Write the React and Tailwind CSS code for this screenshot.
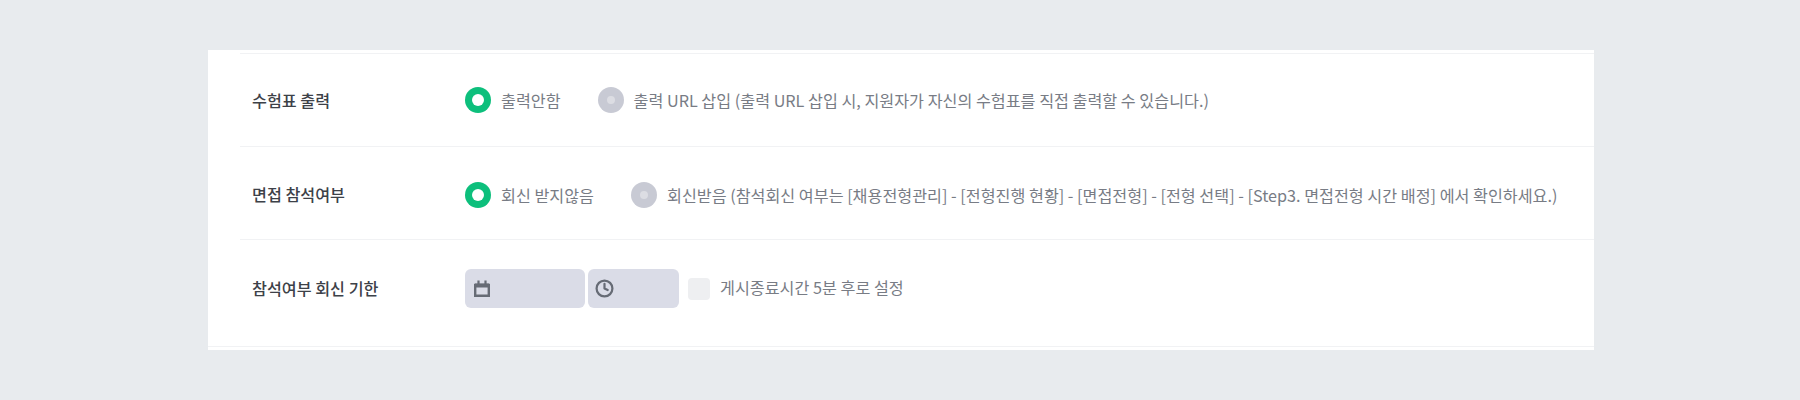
import { Clock } from 'lucide-react';

const FONT = "font-['Noto_Sans_CJK_KR','Noto_Sans',sans-serif]";

function CalendarIcon() {
  return (
    <svg width="16" height="17" viewBox="0 0 16 17" className="text-[#666b75]" fill="none">
      <path d="M1.2 5h13.6v10.8H1.2z" stroke="currentColor" strokeWidth="2.4" />
      <path d="M1 3.5h14V7.5H1z" fill="currentColor" />
      <path d="M4.5 0.5v4M11.5 0.5v4" stroke="currentColor" strokeWidth="2.2" />
    </svg>
  );
}

function Radio({ checked, label, className = '' }) {
  return (
    <div className={`flex items-center gap-[10px] shrink-0 ${className}`}>
      {checked ? (
        <span className="w-[26px] h-[26px] rounded-full bg-[#0dbf7c] flex items-center justify-center">
          <span className="w-[12px] h-[12px] rounded-full bg-white" />
        </span>
      ) : (
        <span className="w-[26px] h-[26px] rounded-full bg-[#c8cad4] flex items-center justify-center">
          <span className="w-[8px] h-[8px] rounded-full bg-[#dcdde3]" />
        </span>
      )}
      <span className="text-[16.2px] leading-[26px] text-[#787c85] whitespace-nowrap">{label}</span>
    </div>
  );
}

function Row({ title, children, className }) {
  return (
    <div className={`flex items-center ${className}`}>
      <div className="w-[225px] pl-[12px] text-[16.2px] font-medium text-[#3d4148] shrink-0">{title}</div>
      {children}
    </div>
  );
}

export default function App() {
  return (
    <div className={`w-[1800px] h-[400px] bg-[#e8ebee] pt-[50px] pl-[208px] ${FONT}`}>
      <div className="w-[1386px] h-[300px] bg-white pl-[32px] pt-[3px]">
        <div className="border-t border-[#f1f2f4]">
          <Row title="수험표 출력" className="h-[93px] border-b border-[#f1f2f4]">
            <Radio checked label="출력안함" />
            <Radio className="ml-[37px]" label="출력 URL 삽입 (출력 URL 삽입 시, 지원자가 자신의 수험표를 직접 출력할 수 있습니다.)" />
          </Row>
          <Row title="면접 참석여부" className="h-[93px] pt-[3px] border-b border-[#f1f2f4]">
            <Radio checked label="회신 받지않음" />
            <Radio className="ml-[37px]" label="회신받음 (참석회신 여부는 [채용전형관리] - [전형진행 현황] - [면접전형] - [전형 선택] - [Step3. 면접전형 시간 배정] 에서 확인하세요.)" />
          </Row>
          <Row title="참석여부 회신 기한" className="h-[106px] pb-[9px]">
            <div className="flex items-center">
              <div className="w-[120px] h-[39px] rounded-[6px] bg-[#dadce7] flex items-center pl-[9px]">
                <CalendarIcon />
              </div>
              <div className="w-[91px] h-[39px] ml-[3px] rounded-[6px] bg-[#dadce7] flex items-center pl-[7px]">
                <Clock size={19} strokeWidth={2.8} className="text-[#666b75]" />
              </div>
              <span className="w-[22px] h-[22px] ml-[9px] rounded-[4px] bg-[#eeeff1]" />
              <span className="ml-[10px] pb-[2px] text-[16.2px] text-[#787c85] whitespace-nowrap">게시종료시간 5분 후로 설정</span>
            </div>
          </Row>
        </div>
        <div className="border-t border-[#f1f2f4] -ml-[32px]" />
      </div>
    </div>
  );
}
